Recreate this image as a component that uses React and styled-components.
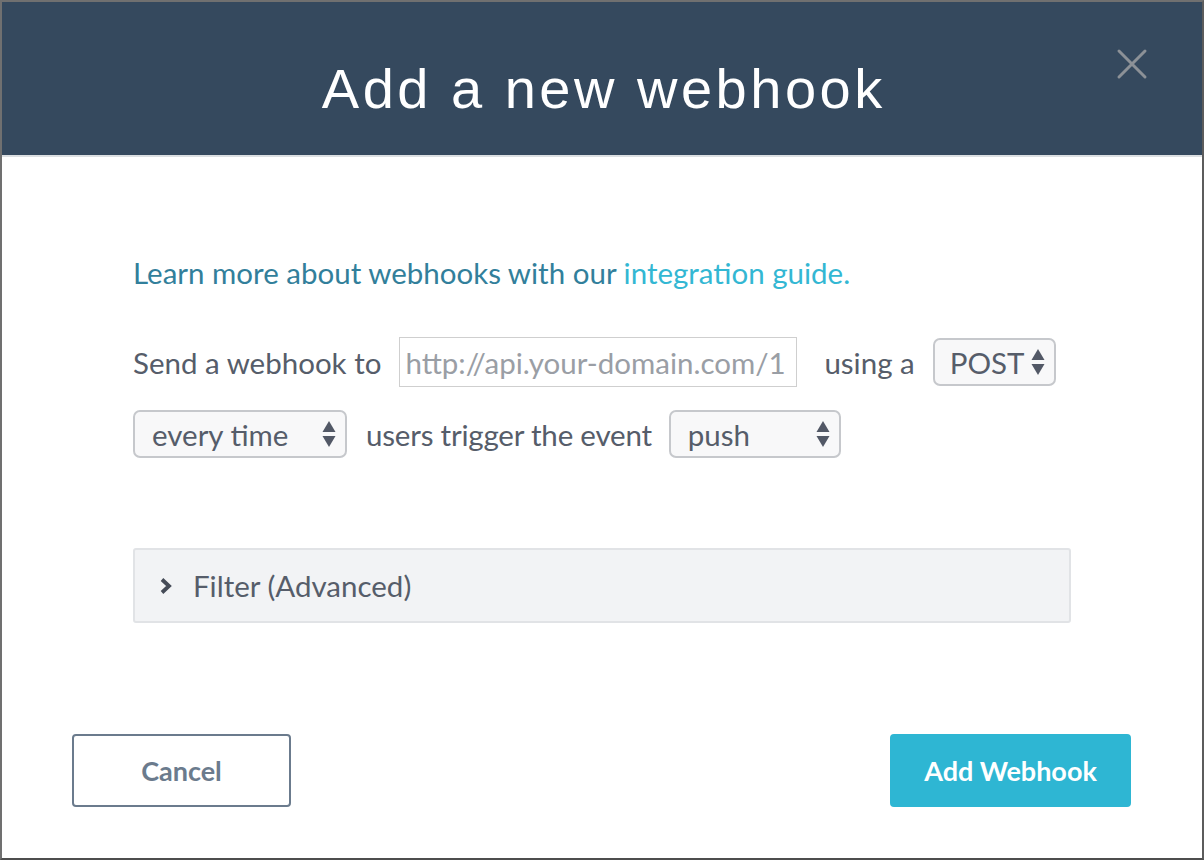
import React from "react";
import styled, { createGlobalStyle } from "styled-components";

const Global = createGlobalStyle`
  html, body { margin: 0; padding: 0; background: #6e6e6e; }
  * { box-sizing: border-box; }
`;

const Modal = styled.div`
  width: 1204px;
  height: 860px;
  border: 2px solid #707070;
  border-right-color: #5c5c5c;
  border-bottom-color: #4e4e4e;
  background: #fff;
  font-family: Lato, "Open Sans", sans-serif;
  display: flex;
  flex-direction: column;
`;

const Header = styled.header`
  position: relative;
  height: 155px;
  background: #35495e;
  border-bottom: 2px solid #dcdfe2;
  display: flex;
  justify-content: center;
  align-items: flex-start;
  padding-top: 55px;
`;

const Title = styled.h1`
  margin: 0 0 0 3.5px;
  font-family: "Liberation Sans", Arial, sans-serif;
  font-weight: 400;
  font-size: 56px;
  letter-spacing: 3.5px;
  line-height: 64px;
  color: #fff;
`;

const Close = styled.button`
  position: absolute;
  top: 46px;
  right: 54px;
  width: 32px;
  height: 32px;
  padding: 0;
  border: 0;
  background: transparent;
  cursor: pointer;
`;

const Body = styled.div`
  padding: 96px 131px 0;
  color: #565d6a;
  font-size: 29.5px;
`;

const Intro = styled.p`
  margin: 0;
  line-height: 40px;
  color: #327f9b;
`;

const Link = styled.a`
  color: #33b7d3;
  text-decoration: none;
`;

const Row = styled.div`
  display: flex;
  align-items: center;
  gap: ${(p) => p.$gap || 18}px;
  margin-top: ${(p) => p.$top}px;
  height: 50px;
`;

const Label = styled.span`
  white-space: nowrap;
  margin-left: ${(p) => p.$ml || 0}px;
  letter-spacing: ${(p) => p.$ls || 0}px;
`;

const UrlInput = styled.input`
  width: 398px;
  height: 50px;
  border: 1px solid #cfcfcf;
  padding: 0 5px;
  font-family: inherit;
  font-size: 29.5px;
  color: #565d6a;
  outline: none;
  &::placeholder { color: #9a9ea5; opacity: 1; }
`;

const SelectBox = styled.div`
  width: ${(p) => p.$w}px;
  height: 48px;
  border: 2px solid #c6c8cc;
  border-radius: 7px;
  background: #f8f8f9;
  display: flex;
  align-items: center;
  justify-content: space-between;
  padding: 0 9px 0 ${(p) => p.$pl || 17}px;
  color: #565d6a;
  font-size: 29.5px;
`;

const Arrows = styled.svg`
  flex: none;
  display: block;
`;

const Select = ({ w, pl, children }) => (
  <SelectBox $w={w} $pl={pl}>
    <span>{children}</span>
    <Arrows width="14" height="30" viewBox="0 0 14 30">
      <path d="M7 2 L13.5 13 H0.5 Z" fill="#525866" />
      <path d="M7 28 L13.5 17 H0.5 Z" fill="#525866" />
    </Arrows>
  </SelectBox>
);

const Filter = styled.div`
  margin-top: 89px;
  height: 75px;
  background: #f2f3f5;
  border: 2px solid #e1e3e6;
  border-radius: 3px;
  display: flex;
  align-items: center;
  padding-left: 23px;
  gap: 19px;
  color: #565d6a;
`;

const Footer = styled.div`
  margin-top: auto;
  padding: 0 71px 51px 70px;
  display: flex;
  justify-content: space-between;
`;

const Button = styled.button`
  height: 73px;
  width: ${(p) => p.$w}px;
  border-radius: 4px;
  font-family: Lato, sans-serif;
  font-weight: 700;
  font-size: 27px;
  cursor: pointer;
  border: 2px solid ${(p) => (p.$primary ? "#2eb6d3" : "#6b7b8d")};
  background: ${(p) => (p.$primary ? "#2eb6d3" : "#fff")};
  color: ${(p) => (p.$primary ? "#fff" : "#6b7b8d")};
`;

export default function App() {
  return (
    <>
      <Global />
      <Modal>
        <Header>
          <Title>Add a new webhook</Title>
          <Close aria-label="Close">
            <svg width="32" height="32" viewBox="0 0 32 32">
              <path d="M3 3 L29 29 M29 3 L3 29" stroke="#8c9197" strokeWidth="3" strokeLinecap="round" />
            </svg>
          </Close>
        </Header>
        <Body>
          <Intro>
            Learn more about webhooks with our <Link href="#">integration guide.</Link>
          </Intro>
          <Row $top={44}>
            <Label>Send a webhook to</Label>
            <UrlInput placeholder="http://api.your-domain.com/1" />
            <Label $ml={9}>using a</Label>
            <Select w={123} pl={15}>POST</Select>
          </Row>
          <Row $top={22} $gap={17}>
            <Select w={214}>every time</Select>
            <Label $ml={2} $ls={-0.2}>users trigger the event</Label>
            <Select w={172}>push</Select>
          </Row>
          <Filter>
            <svg width="16" height="22" viewBox="0 0 16 22">
              <path d="M4 4.5 L11 11 L4 17.5" stroke="#454b57" strokeWidth="3.8" fill="none" />
            </svg>
            <span>Filter (Advanced)</span>
          </Filter>
        </Body>
        <Footer>
          <Button $w={219}>Cancel</Button>
          <Button $primary $w={241}>Add Webhook</Button>
        </Footer>
      </Modal>
    </>
  );
}
